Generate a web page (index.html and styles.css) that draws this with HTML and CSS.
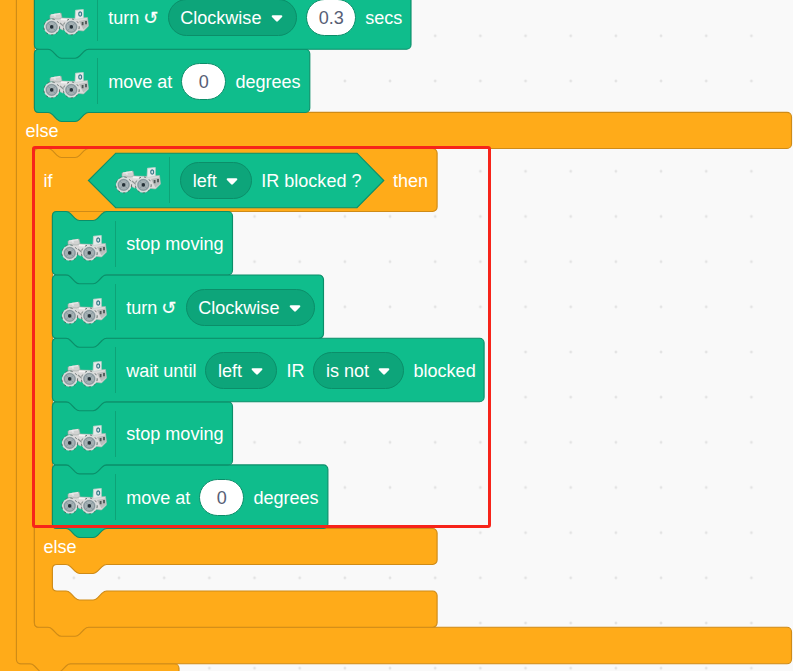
FILE: index.html
```html
<!DOCTYPE html>
<html lang="en">
<head>
<meta charset="utf-8">
<title>Block workspace</title>
<link rel="stylesheet" href="styles.css">
</head>
<body>
<main class="workspace">
  <svg class="shapes" width="793" height="671" viewBox="0 0 793 671" aria-hidden="true">
    <defs>
      <pattern id="grid" x="6.1" y="13.2" width="45.17" height="45.17" patternUnits="userSpaceOnUse">
        <path class="dot" d="M21.2 22.6h2.8M22.6 21.2v2.8"/>
      </pattern>
      <symbol id="rover" viewBox="0 0 46 28">
        <path d="M10 8 20 9l13 .5 11.5-1 1 8.5-5 5-8-1-5-3-8 3-9-5z" fill="#dcdbdb" stroke="#b3b5b4" stroke-width=".6"/>
        <path d="M7 6 12 5l6-1 1 4.5-3 1.5-9-.5z" fill="#d1d2d1" stroke="#a0aaa6" stroke-width=".6"/>
        <path d="m8 6 9-1.4M12 4.6v3.4" stroke="#ececec" stroke-width="1.1"/>
        <path d="m18 10.4 14 .5" stroke="#f5f3f3" stroke-width="1.8"/>
        <path d="m17 14 4.5 4" fill="none" stroke="#8d9492" stroke-width="1.2"/>
        <path d="m32.5 1.2 7.8-.8v8.8l-8.3 1.3z" fill="#e8eaea" stroke="#c3d2ce" stroke-width=".7"/>
        <ellipse cx="37.2" cy="5" rx="1.5" ry="2.1" fill="#d1e4e5" stroke="#357686" stroke-width="1.1"/>
        <path d="m36 12 8.5-1.6.4 6.4-4.5 3.8z" fill="#b9bdbc"/>
        <path d="M39.6 13v3.2M43 12v3.2" stroke="#4d5755" stroke-width="1.8"/>
        <g fill="#a5b1b4" stroke="#dadddc" stroke-width="1.6">
          <circle cx="8.7" cy="17.9" r="7"/>
          <circle cx="28.3" cy="17.9" r="7"/>
        </g>
        <g fill="none" stroke="#4b5855" stroke-width=".8" stroke-dasharray="2.2 3.2">
          <circle cx="8.7" cy="17.9" r="7.9"/><circle cx="28.3" cy="17.9" r="7.9"/>
        </g>
        <g fill="none" stroke="#7b8b93" stroke-width=".8">
          <circle cx="8.7" cy="17.9" r="5.3"/><circle cx="28.3" cy="17.9" r="5.3"/>
          <path d="m5 14.2 7.4 7.4m0-7.4L5 21.6m19.6-7.4 7.4 7.4m0-7.4-7.4 7.4" stroke="#83939b" stroke-width=".8"/>
        </g>
        <g fill="#253138"><circle cx="8.7" cy="17.9" r="1.8"/><circle cx="28.3" cy="17.9" r="1.8"/></g>
      </symbol>
      <symbol id="arrow" viewBox="0 0 13 9">
        <path d="M2 1.2h9q1.6.5.5 1.8L7.4 7.3q-.9.8-1.8 0L1.5 3Q.4 1.7 2 1.2z" fill="#fff"/>
      </symbol>
    </defs>
    <rect width="793" height="671" fill="url(#grid)"/>

    <!-- enclosing blocks -->
    <path class="control" d="M-5-5H20V663.8H174.5a4.5 4.5 0 0 1 4.5 4.5V680H-5z"/>
    <path class="control" d="M16.4-5H34.4V108q0 4.4 4.5 4.4H787a4.5 4.5 0 0 1 4.5 4.5V144a4.5 4.5 0 0 1-4.5 4.5H38.9q-4.5 0-4.5 4.5V622.8q0 4.5 4.5 4.5H787a4.5 4.5 0 0 1 4.5 4.5V659.3a4.5 4.5 0 0 1-4.5 4.5H70.6c-2.3 0-3.4 1.1-4.5 2.2l-4.5 4.6c-1.2 1.1-2.3 2.2-4.5 2.2H43.5c-2.2 0-3.4-1.1-4.5-2.2L34.5 666c-1.1-1.1-2.2-2.2-4.5-2.2h-9.1q-4.5 0-4.5-4.5z"/>
    <path class="notch-fill" d="M40 147h56v13H40zM58 210h56v13H58z"/>

    <!-- nested if / else -->
    <path class="control" d="M34.4 153q0-4.5 4.5-4.5H48c2.2 0 3.4 1.1 4.5 2.2l4.5 4.6c1.2 1.1 2.3 2.2 4.5 2.2h13.6c2.2 0 3.4-1.1 4.5-2.2l4.5-4.6c1.2-1.1 2.3-2.2 4.5-2.2H432.6a4.5 4.5 0 0 1 4.5 4.5V207a4.5 4.5 0 0 1-4.5 4.5H56.9q-4.5 0-4.5 4.5V524q0 4.5 4.5 4.5H432.6a4.5 4.5 0 0 1 4.5 4.5V560a4.5 4.5 0 0 1-4.5 4.5H106.6c-2.2 0-3.3 1.1-4.5 2.2l-4.5 4.5c-1.1 1.2-2.3 2.3-4.5 2.3H79.5c-2.2 0-3.3-1.1-4.5-2.3l-4.5-4.5c-1.1-1.1-2.3-2.2-4.5-2.2h-9.1q-4.5 0-4.5 4.5v17.5q0 4.5 4.5 4.5H66c2.2 0 3.4 1.1 4.5 2.2l4.5 4.6c1.2 1.1 2.3 2.2 4.5 2.2h13.6c2.2 0 3.4-1.1 4.5-2.2l4.5-4.6c1.2-1.1 2.3-2.2 4.5-2.2h326a4.5 4.5 0 0 1 4.5 4.5V622.8a4.5 4.5 0 0 1-4.5 4.5H88.6c-2.2 0-3.3 1.1-4.5 2.2l-4.5 4.6c-1.1 1.1-2.3 2.2-4.5 2.2H61.5c-2.2 0-3.3-1.1-4.5-2.2l-4.5-4.6c-1.1-1.1-2.3-2.2-4.5-2.2h-9.1q-4.5 0-4.5-4.5z"/>
    <path class="rover-block" d="M115.7 153.2H357l26.8 27.3-26.8 27.2H115.7L88.4 180.5z"/>

    <!-- statements, last one first so each connector overlaps its successor -->
    <path class="rover-block" d="M34.4 53.8q0-4.5 4.5-4.5H305.3a4.5 4.5 0 0 1 4.5 4.5V108a4.5 4.5 0 0 1-4.5 4.5H88.6c-2.2 0-3.3 1.1-4.5 2.2l-4.5 4.6c-1.1 1.1-2.3 2.2-4.5 2.2H61.5c-2.2 0-3.3-1.1-4.5-2.2l-4.5-4.6c-1.1-1.1-2.3-2.2-4.5-2.2h-9.1q-4.5 0-4.5-4.5z"/>
    <path class="rover-block" d="M34.4-14H411V44.7a4.5 4.5 0 0 1-4.5 4.5H88.6c-2.2 0-3.3 1.1-4.5 2.2l-4.5 4.6c-1.1 1.1-2.3 2.2-4.5 2.2H61.5c-2.2 0-3.3-1.1-4.5-2.2l-4.5-4.6c-1.1-1.1-2.3-2.2-4.5-2.2h-9.1q-4.5 0-4.5-4.5z"/>

    <path class="rover-block" d="M52.4 469.4q0-4.5 4.5-4.5H323.4a4.5 4.5 0 0 1 4.5 4.5V524a4.5 4.5 0 0 1-4.5 4.5H106.6c-2.2 0-3.3 1.1-4.5 2.2l-4.5 4.6c-1.1 1.1-2.3 2.2-4.5 2.2H79.5c-2.2 0-3.3-1.1-4.5-2.2l-4.5-4.6c-1.1-1.1-2.3-2.2-4.5-2.2h-9.1q-4.5 0-4.5-4.5z"/>
    <path class="rover-block" d="M52.4 406.4q0-4.5 4.5-4.5H228a4.5 4.5 0 0 1 4.5 4.5V460.4a4.5 4.5 0 0 1-4.5 4.5H106.6c-2.2 0-3.3 1.1-4.5 2.2l-4.5 4.6c-1.1 1.1-2.3 2.2-4.5 2.2H79.5c-2.2 0-3.3-1.1-4.5-2.2l-4.5-4.6c-1.1-1.1-2.3-2.2-4.5-2.2h-9.1q-4.5 0-4.5-4.5z"/>
    <path class="rover-block" d="M52.4 342.8q0-4.5 4.5-4.5H479.6a4.5 4.5 0 0 1 4.5 4.5V397.2a4.5 4.5 0 0 1-4.5 4.5H106.6c-2.2 0-3.3 1.1-4.5 2.2l-4.5 4.6c-1.1 1.1-2.3 2.2-4.5 2.2H79.5c-2.2 0-3.3-1.1-4.5-2.2l-4.5-4.6c-1.1-1.1-2.3-2.2-4.5-2.2h-9.1q-4.5 0-4.5-4.5z"/>
    <path class="rover-block" d="M52.4 279.5q0-4.5 4.5-4.5H319a4.5 4.5 0 0 1 4.5 4.5V333.8a4.5 4.5 0 0 1-4.5 4.5H106.6c-2.2 0-3.3 1.1-4.5 2.2l-4.5 4.6c-1.1 1.1-2.3 2.2-4.5 2.2H79.5c-2.2 0-3.3-1.1-4.5-2.2l-4.5-4.6c-1.1-1.1-2.3-2.2-4.5-2.2h-9.1q-4.5 0-4.5-4.5z"/>
    <path class="rover-block" d="M52.4 216q0-4.5 4.5-4.5H66c2.2 0 3.4 1.1 4.5 2.2l4.5 4.6c1.2 1.1 2.3 2.2 4.5 2.2h13.6c2.2 0 3.4-1.1 4.5-2.2l4.5-4.6c1.2-1.1 2.3-2.2 4.5-2.2H228a4.5 4.5 0 0 1 4.5 4.5V270.3a4.5 4.5 0 0 1-4.5 4.5H106.6c-2.2 0-3.3 1.1-4.5 2.2l-4.5 4.6c-1.1 1.1-2.3 2.2-4.5 2.2H79.5c-2.2 0-3.3-1.1-4.5-2.2l-4.5-4.6c-1.1-1.1-2.3-2.2-4.5-2.2h-9.1q-4.5 0-4.5-4.5z"/>
  </svg>

  <div class="script">
    <div class="row row-first">
      <svg class="rover"><use href="#rover"/></svg><i class="divider"></i>
      <span class="turn-label">turn <b class="turn">↺</b></span>
      <span class="menu clockwise">Clockwise <svg class="arrow"><use href="#arrow"/></svg></span>
      <span class="value secs">0.3</span><span>secs</span>
    </div>
    <div class="row">
      <svg class="rover"><use href="#rover"/></svg><i class="divider"></i>
      <span>move at</span><span class="value">0</span><span>degrees</span>
    </div>
    <div class="else else-outer">else</div>

    <div class="row row-if">
      <span class="if">if</span>
      <div class="condition">
        <svg class="rover"><use href="#rover"/></svg><i class="divider"></i>
        <span class="menu left">left <svg class="arrow"><use href="#arrow"/></svg></span>
        <span>IR blocked ?</span>
      </div>
      <span>then</span>
    </div>
    <div class="nested">
      <div class="row">
        <svg class="rover"><use href="#rover"/></svg><i class="divider"></i>
        <span>stop moving</span>
      </div>
      <div class="row">
        <svg class="rover"><use href="#rover"/></svg><i class="divider"></i>
        <span class="turn-label">turn <b class="turn">↺</b></span>
        <span class="menu clockwise">Clockwise <svg class="arrow"><use href="#arrow"/></svg></span>
      </div>
      <div class="row">
        <svg class="rover"><use href="#rover"/></svg><i class="divider"></i>
        <span>wait until</span>
        <span class="menu left">left <svg class="arrow"><use href="#arrow"/></svg></span>
        <span>IR</span>
        <span class="menu is-not">is not <svg class="arrow"><use href="#arrow"/></svg></span>
        <span>blocked</span>
      </div>
      <div class="row">
        <svg class="rover"><use href="#rover"/></svg><i class="divider"></i>
        <span>stop moving</span>
      </div>
      <div class="row row-last">
        <svg class="rover"><use href="#rover"/></svg><i class="divider"></i>
        <span>move at</span><span class="value">0</span><span>degrees</span>
      </div>
    </div>
    <div class="else else-inner">else</div>
  </div>
  <div class="highlight"></div>
</main>
</body>
</html>
```

FILE: styles.css
```css
* { box-sizing: border-box; }

body {
  margin: 0;
  overflow: hidden;
  background: #f9f9f9;
}

.workspace {
  position: relative;
  width: 793px;
  height: 671px;
  overflow: hidden;
  color: #fff;
  font: 18.06px/20px "Liberation Sans", Arial, sans-serif;
  white-space: nowrap;
}

.shapes {
  position: absolute;
  inset: 0;
}

.dot { stroke: #ddd; stroke-width: 1.1; }
.control { fill: #ffab19; stroke: #cf8b17; stroke-width: 1.13; }
.notch-fill { fill: #ffab19; }
.rover-block { fill: #0fbd8c; stroke: #0b8e69; stroke-width: 1.13; }

.script {
  position: relative;
  padding-left: 34.4px;
}

.row {
  display: flex;
  align-items: center;
  gap: 9px;
  height: 63.4px;
  padding-left: 9px;
}

.row span { padding-top: 1.2px; }

.row-first { margin-top: -14px; }

.rover {
  flex: none;
  width: 46px;
  height: 28px;
  margin: 10px -1px 0 0;
}

.divider {
  flex: none;
  width: 1px;
  height: 46px;
  margin-right: .8px;
  background: #0da377;
}

.turn-label {
  display: flex;
  width: 50.5px;
}

.turn {
  margin-left: 4px;
  width: 15px;
  font: normal 18px/20px "DejaVu Sans", sans-serif;
  -webkit-text-stroke: .2px #fff;
}

.menu,
.value {
  display: flex;
  flex: none;
  align-items: center;
  height: 37px;
  border: 1px solid #0b8e69;
  border-radius: 18.5px;
}

.row .menu {
  justify-content: space-between;
  padding: 1.2px 12.5px 0 11.5px;
  background: #0da57a;
}

.clockwise { width: 129.5px; }
.left { width: 72px; }
.is-not { width: 91px; }

.arrow { width: 14px; height: 9px; margin-top: 1px; }

.value {
  justify-content: center;
  width: 45px;
  background: #fff;
  color: #575e75;
}

.secs { width: 50px; }

.else { height: 36px; line-height: 36px; }
.else-outer { margin-left: -9px; }
.else-inner { padding-left: 9px; }

.row-if { height: 63px; }
.if { width: 36px; }

.condition {
  display: flex;
  align-items: center;
  gap: 9px;
  width: 295.5px;
  padding-left: 27px;
}

.row-if .rover { margin-top: 1px; }

.nested { padding: .2px 0 0 18px; }
.row-last { height: 63px; }

.highlight {
  position: absolute;
  top: 145.7px;
  left: 31.8px;
  width: 459px;
  height: 382.5px;
  border: 3px solid #f7241a;
  border-radius: 3px;
}
```
